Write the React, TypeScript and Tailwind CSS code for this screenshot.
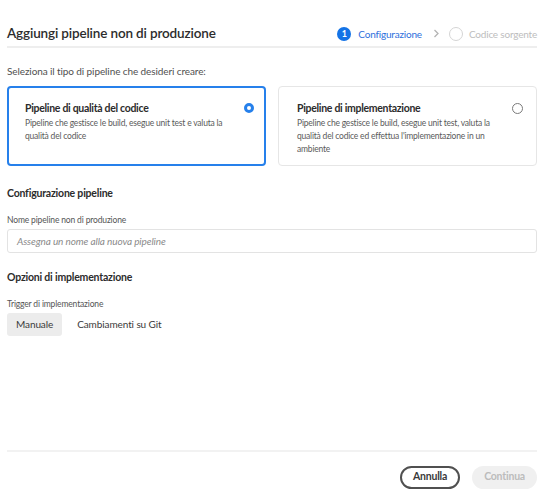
import React from "react";

export default function App() {
  const font = { fontFamily: "Lato, 'Noto Sans', sans-serif" };
  return (
    <div className="w-[546px] h-[502px] bg-white flex flex-col pl-[7px] pr-[9px] text-[#2c2c2c]" style={font}>
      <div className="flex items-center justify-between h-[48px] pt-[21px] border-b-2 border-[#eeeeee]">
        <h1 className="text-[13.5px] tracking-[-0.15px] font-semibold text-[#2c2c2c] leading-none">Aggiungi pipeline non di produzione</h1>
        <div className="flex items-center text-[10px] tracking-[-0.2px] leading-none">
          <span className="w-[14px] h-[14px] rounded-full bg-[#1473e6] text-white text-[9px] font-bold flex items-center justify-center">1</span>
          <span className="ml-[7px] text-[#2d6fdc]">Configurazione</span>
          <svg className="ml-[11px]" width="7" height="9" viewBox="0 0 7 9"><path d="M1.5 1 L5 4.5 L1.5 8" fill="none" stroke="#b3b3b3" strokeWidth="1.3" /></svg>
          <span className="ml-[9px] w-[14px] h-[14px] rounded-full border border-[#d5d5d5]"></span>
          <span className="ml-[6px] text-[#bdbdbd] whitespace-nowrap">Codice sorgente</span>
        </div>
      </div>

      <p className="mt-[18px] text-[10px] tracking-[-0.1px] text-[#505050] leading-none">Seleziona il tipo di pipeline che desideri creare:</p>

      <div className="mt-[10px] grid grid-cols-2 gap-[12px]">
        <div className="h-[80px] rounded-[4px] border-2 border-[#2680eb] pl-[16px] pr-[10px] pt-[13px] flex">
          <div className="flex-1">
            <div className="text-[10.5px] tracking-[-0.3px] font-bold text-[#2c2c2c] leading-[14px]">Pipeline di qualità del codice</div>
            <div className="mt-[2px] text-[8.5px] tracking-[-0.2px] text-[#5a5a5a] leading-[13px] pr-[14px]">Pipeline che gestisce le build, esegue unit test e valuta la qualità del codice</div>
          </div>
          <span className="mt-[2px] w-[10px] h-[10px] rounded-full border-[3px] border-[#2680eb] bg-white shrink-0"></span>
        </div>
        <div className="h-[80px] rounded-[4px] border border-[#e6e6e6] pl-[18px] pr-[13px] pt-[14px] flex">
          <div className="flex-1">
            <div className="text-[10.5px] tracking-[-0.3px] font-bold text-[#2c2c2c] leading-[14px]">Pipeline di implementazione</div>
            <div className="mt-[2px] text-[8.5px] tracking-[-0.2px] text-[#5a5a5a] leading-[13px] pr-[16px]">Pipeline che gestisce le build, esegue unit test, valuta la qualità del codice ed effettua l'implementazione in un ambiente</div>
          </div>
          <span className="mt-[2px] w-[11px] h-[11px] rounded-full border border-[#7a7a7a] bg-white shrink-0"></span>
        </div>
      </div>

      <h2 className="mt-[22px] text-[10.5px] tracking-[-0.2px] font-bold leading-none">Configurazione pipeline</h2>
      <label className="mt-[17px] text-[8.5px] tracking-[-0.15px] text-[#555] leading-none">Nome pipeline non di produzione</label>
      <div className="mt-[5px] h-[24px] rounded-[3px] border border-[#e3e3e3] flex items-center pl-[9px]">
        <span className="text-[10px] tracking-[-0.1px] italic text-[#8a8a8a]">Assegna un nome alla nuova pipeline</span>
      </div>

      <h2 className="mt-[19px] text-[10.5px] tracking-[-0.2px] font-bold leading-none">Opzioni di implementazione</h2>
      <label className="mt-[17px] text-[8.5px] tracking-[-0.15px] text-[#555] leading-none">Trigger di implementazione</label>
      <div className="mt-[5px] flex items-center text-[10px] tracking-[-0.1px]">
        <span className="h-[23px] px-[9px] rounded-[3px] bg-[#ececec] flex items-center text-[#3a3a3a]">Manuale</span>
        <span className="ml-[15px] text-[#3a3a3a]">Cambiamenti su Git</span>
      </div>

      <div className="mt-auto border-t-2 border-[#f2f2f2] h-[52px] flex items-center justify-end gap-[12px]">
        <span className="h-[23px] px-[11px] rounded-full border-2 border-[#505050] flex items-center text-[10.5px] tracking-[-0.2px] font-bold text-[#3a3a3a]">Annulla</span>
        <span className="h-[23px] px-[12px] rounded-full bg-[#f0f0f0] flex items-center text-[10.5px] tracking-[-0.2px] font-bold text-[#bcbcbc]">Continua</span>
      </div>
    </div>
  );
}
